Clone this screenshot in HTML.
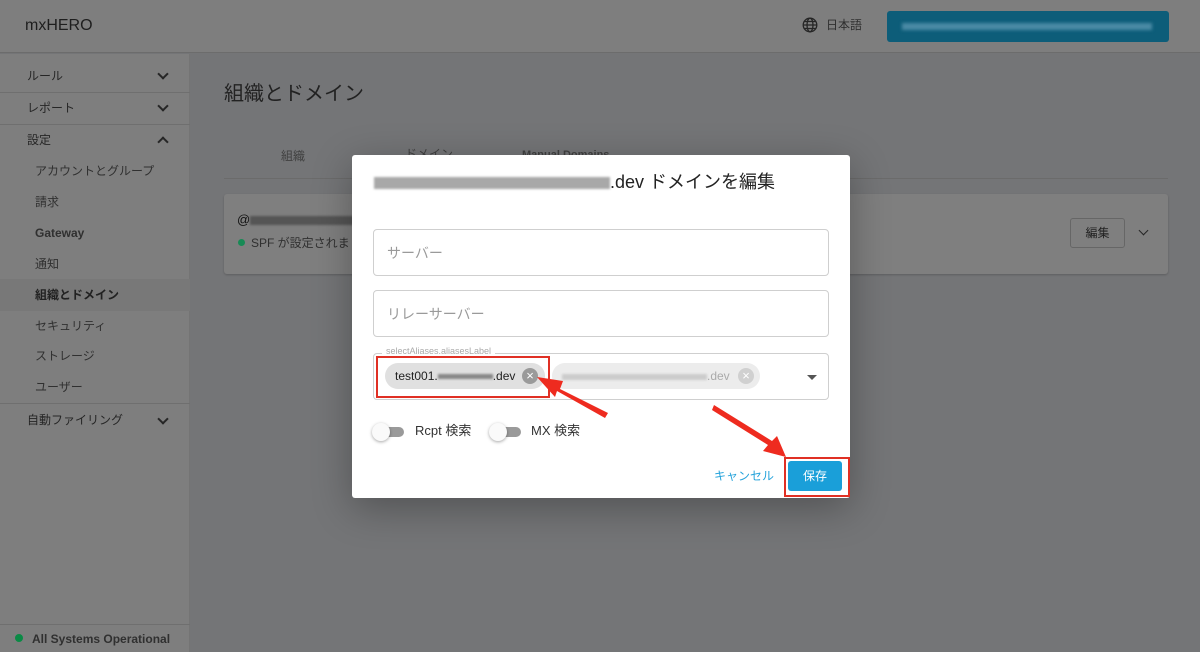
<!DOCTYPE html>
<html><head><meta charset="utf-8"><style>
*{box-sizing:border-box;margin:0;padding:0}
body{width:1200px;height:652px;overflow:hidden;position:relative;background:#747577;font-family:"Liberation Sans","Noto Sans CJK JP",sans-serif;color:#222;line-height:1.2}
.abs{position:absolute}
.hdr{left:0;top:0;width:1200px;height:53px;background:#7e7e7e;border-bottom:1px solid #6c6c6c}
.side{left:0;top:54px;width:190px;height:598px;background:#7e7e7e;border-right:1px solid #747474}
.si{position:absolute;left:27px;font-size:12px;color:#262626;line-height:14px}
.sub{position:absolute;left:35px;font-size:12px;color:#303030;line-height:14px}
.chev{position:absolute;left:159px;width:8px;height:8px;border-right:2px solid #262626;border-bottom:2px solid #262626;transform:rotate(45deg)}
.sep{position:absolute;left:0;width:190px;height:1px;background:#6f6f6f}
.blur{display:inline-block;height:9px;background:#9a9a9a;filter:blur(1px);vertical-align:middle}
.modal{left:352px;top:155px;width:498px;height:343px;background:#fff;border-radius:3px;box-shadow:0 10px 40px rgba(0,0,0,.3)}
.fld{position:absolute;left:21px;width:456px;height:47px;border:1px solid #cfcfcf;border-radius:4px;font-size:14px;color:#9a9a9a;padding:15px 0 0 13px}
</style></head><body>
<div class="abs hdr">
 <div class="abs" style="left:25px;top:16px;font-size:16px;color:#1e1e1e">mxHERO</div>
 <svg class="abs" style="left:802px;top:17px" width="16" height="16" viewBox="0 0 16 16" fill="none" stroke="#262626" stroke-width="1.3"><circle cx="8" cy="8" r="6.8"/><ellipse cx="8" cy="8" rx="3" ry="6.8"/><path d="M1.2 8h13.6M2.3 4.5h11.4M2.3 11.5h11.4"/></svg>
 <div class="abs" style="left:826px;top:18px;font-size:12px;color:#303030">日本語</div>
 <div class="abs" style="left:887px;top:11px;width:282px;height:31px;background:#0d5d79;border-radius:3px">
  <div class="abs" style="left:15px;top:12px;width:250px;height:7px;background:#4a8aa5;filter:blur(1.5px)"></div></div>
</div>
<div class="abs side">
 <div class="si" style="top:15px">ルール</div><div class="chev" style="top:16px"></div>
 <div class="sep" style="top:38px"></div>
 <div class="si" style="top:47px">レポート</div><div class="chev" style="top:48px"></div>
 <div class="sep" style="top:70px"></div>
 <div class="si" style="top:79px">設定</div><div class="chev" style="top:84px;transform:rotate(-135deg)"></div>
 <div class="sub" style="top:110px">アカウントとグループ</div>
 <div class="sub" style="top:141px">請求</div>
 <div class="sub" style="top:172px;font-weight:bold">Gateway</div>
 <div class="sub" style="top:203px">通知</div>
 <div class="abs" style="left:0;top:225px;width:190px;height:32px;background:#787878"></div>
 <div class="sub" style="top:234px;font-weight:bold;color:#222">組織とドメイン</div>
 <div class="sub" style="top:265px">セキュリティ</div>
 <div class="sub" style="top:295px">ストレージ</div>
 <div class="sub" style="top:326px">ユーザー</div>
 <div class="sep" style="top:349px"></div>
 <div class="si" style="top:359px">自動ファイリング</div><div class="chev" style="top:361px"></div>
 <div class="sep" style="top:570px"></div>
 <div class="abs" style="left:15px;top:580px;width:8px;height:8px;border-radius:50%;background:#0a8a45"></div>
 <div class="abs" style="left:32px;top:578px;font-size:12px;font-weight:bold;color:#303030">All Systems Operational</div>
</div>
<div class="abs" style="left:224px;top:82px;font-size:20px;color:#222">組織とドメイン</div>
<div class="abs" style="left:281px;top:149px;font-size:12px;color:#404040">組織</div>
<div class="abs" style="left:405px;top:147px;font-size:12px;color:#404040">ドメイン</div>
<div class="abs" style="left:522px;top:149px;font-size:11px;color:#404040;font-weight:bold">Manual Domains</div>
<div class="abs" style="left:224px;top:178px;width:944px;height:1px;background:#6b6b6b"></div>
<div class="abs" style="left:224px;top:194px;width:944px;height:80px;background:#7f7f7f;border-radius:3px;box-shadow:0 1px 2px rgba(0,0,0,.2)">
 <div class="abs" style="left:13px;top:18px;font-size:13px;color:#111">@<span class="blur" style="width:110px;background:#555"></span></div>
 <div class="abs" style="left:14px;top:45px;width:7px;height:7px;border-radius:50%;background:#178a55"></div>
 <div class="abs" style="left:27px;top:42px;font-size:12px;color:#303030">SPF が設定されま</div>
 <div class="abs" style="left:846px;top:24px;width:55px;height:30px;border:1px solid #666;border-radius:3px;font-size:12px;color:#222;text-align:center;line-height:28px">編集</div>
 <div class="chev" style="left:916px;top:33px;width:7px;height:7px;border-width:1.5px"></div>
</div>
<div class="abs modal">
 <div class="abs" style="left:22px;top:17px;font-size:18px;color:#222;white-space:nowrap"><span class="blur" style="width:236px;height:12px;background:#a8a8a8"></span>.dev ドメインを編集</div>
 <div class="fld" style="top:74px">サーバー</div>
 <div class="fld" style="top:135px">リレーサーバー</div>
 <div class="fld" style="top:198px;padding:0"></div>
 <div class="abs" style="left:30px;top:191px;font-size:9px;color:#aaa;background:#fff;padding:0 4px">selectAliases.aliasesLabel</div>
 <div class="abs" style="left:33px;top:208px;width:160px;height:26px;background:#e0e0e0;border-radius:13px">
  <div class="abs" style="left:10px;top:6px;font-size:12px;color:#222;white-space:nowrap">test001.<span class="blur" style="width:55px;height:5px;background:#888"></span>.dev</div>
  <div class="abs" style="left:137px;top:5px;width:16px;height:16px;border-radius:50%;background:#9a9a9a;color:#fff;font-size:13px;text-align:center;line-height:15px">×</div></div>
 <div class="abs" style="left:200px;top:208px;width:208px;height:26px;background:#ececec;border-radius:13px">
  <div class="abs" style="left:10px;top:6px;font-size:12px;color:#aaa;white-space:nowrap"><span class="blur" style="width:145px;height:6px;background:#ccc"></span>.dev</div>
  <div class="abs" style="left:186px;top:5px;width:16px;height:16px;border-radius:50%;background:#d0d0d0;color:#fff;font-size:13px;text-align:center;line-height:15px">×</div></div>
 <div class="abs" style="left:455px;top:220px;border-left:5px solid transparent;border-right:5px solid transparent;border-top:5px solid #555"></div>
 <div class="abs" style="left:22px;top:272px;width:30px;height:10px;border-radius:5px;background:#9a9a9a"></div>
 <div class="abs" style="left:20px;top:268px;width:18px;height:18px;border-radius:50%;background:#fafafa;box-shadow:0 1px 3px rgba(0,0,0,.35)"></div>
 <div class="abs" style="left:63px;top:268px;font-size:13px;color:#333">Rcpt 検索</div>
 <div class="abs" style="left:139px;top:272px;width:30px;height:10px;border-radius:5px;background:#9a9a9a"></div>
 <div class="abs" style="left:137px;top:268px;width:18px;height:18px;border-radius:50%;background:#fafafa;box-shadow:0 1px 3px rgba(0,0,0,.35)"></div>
 <div class="abs" style="left:179px;top:268px;font-size:13px;color:#333">MX 検索</div>
 <div class="abs" style="left:362px;top:314px;font-size:12px;color:#26a3db">キャンセル</div>
 <div class="abs" style="left:436px;top:306px;width:54px;height:30px;background:#1a9fd9;border-radius:3px;color:#fff;font-size:12px;text-align:center;line-height:30px">保存</div>
</div>
<div class="abs" style="left:376px;top:356px;width:174px;height:42px;border:2px solid #e03024"></div>
<div class="abs" style="left:784px;top:457px;width:66px;height:40px;border:2px solid #e03024"></div>
<svg class="abs" style="left:0;top:0" width="1200" height="652"><g fill="#ee2b1f"><path d="M608 413 L560 389 L563 381 L537 377 L555 397 L557 391 L605 418Z"/><path d="M712 410 L768 445 L763 451 L786 457 L777 436 L772 441 L714 405Z"/></g></svg>
</body></html>
